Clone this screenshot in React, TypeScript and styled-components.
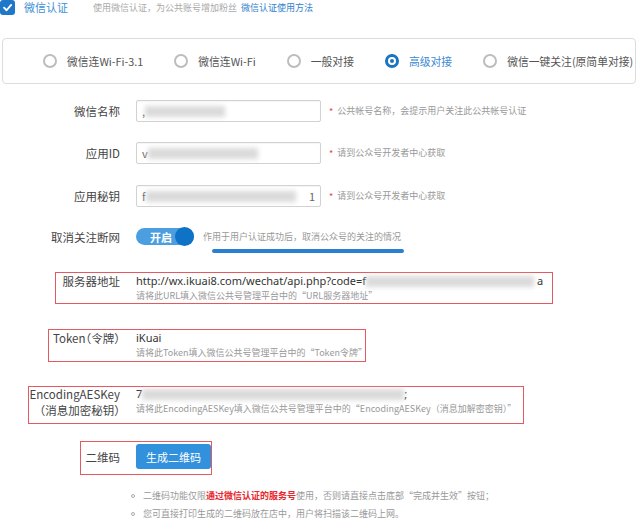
import React from "react";
import styled, { createGlobalStyle } from "styled-components";

const Global = createGlobalStyle`
  html, body { margin: 0; padding: 0; background: #fff; }
  body {
    font-family: "Noto Sans CJK SC", "Noto Sans", sans-serif;
    color: #444;
  }
`;

const Page = styled.div`
  width: 640px;
  height: 525px;
  position: relative;
  overflow: hidden;
  background: #fff;
`;

const Header = styled.div`
  display: flex;
  align-items: center;
  height: 15px;
`;

const CheckBox = styled.span`
  width: 15px;
  height: 15px;
  border-radius: 3px;
  background: #1f77c8;
  display: inline-flex;
  align-items: center;
  justify-content: center;
  flex: none;
`;

const HeaderTitle = styled.span`
  margin-left: 9px;
  font-size: 11px;
  line-height: 15px;
  color: #3c8fd6;
`;

const HeaderDesc = styled.span`
  margin-left: 25px;
  font-size: 9px;
  line-height: 15px;
  color: #aaa;
`;

const Link = styled.a`
  color: #2f82cc;
  margin-left: 4px;
  text-decoration: none;
`;

const ModePanel = styled.div`
  margin: 23px 4px 0 2px;
  height: 46px;
  box-sizing: border-box;
  border: 1px solid #dcdcdc;
  border-radius: 4px;
  display: flex;
  align-items: center;
  padding-left: 40px;
  gap: 31px;
`;

const RadioItem = styled.label<{ $on?: boolean }>`
  display: flex;
  align-items: center;
  gap: 10px;
  font-size: 10.8px;
  color: ${(p) => (p.$on ? "#3a8ad2" : "#555")};
  white-space: nowrap;
`;

const RadioDot = styled.span<{ $on?: boolean }>`
  width: 14px;
  height: 14px;
  box-sizing: border-box;
  border-radius: 50%;
  border: ${(p) => (p.$on ? "3px solid #1b74c0" : "2.5px solid #bdbdbd")};
  display: inline-flex;
  align-items: center;
  justify-content: center;
  flex: none;
  &::after {
    content: "";
    width: 4px;
    height: 4px;
    border-radius: 50%;
    background: ${(p) => (p.$on ? "#1b74c0" : "transparent")};
  }
`;

const Row = styled.div<{ $mt: number; $align?: string }>`
  position: relative;
  display: grid;
  grid-template-columns: 120px 1fr;
  column-gap: 16px;
  align-items: ${(p) => p.$align || "center"};
  margin-top: ${(p) => p.$mt}px;
`;

const Label = styled.div`
  font-size: 11.5px;
  line-height: 16px;
  color: #444;
  text-align: right;
  white-space: nowrap;
  font-feature-settings: "halt";
`;

const Content = styled.div`
  display: flex;
  align-items: center;
`;

const Field = styled.div`
  width: 185px;
  height: 22px;
  box-sizing: border-box;
  border: 1px solid #d2d2d2;
  border-radius: 2px;
  display: flex;
  align-items: center;
  padding: 0 5px;
  font-size: 11px;
  color: #666;
  box-shadow: inset 0 1px 1px rgba(0, 0, 0, 0.04);
`;

const Smudge = styled.span<{ $w: number }>`
  display: inline-block;
  width: ${(p) => p.$w}px;
  height: 11px;
  background: #d6d6d6;
  filter: blur(2.5px);
  opacity: 0.9;
  flex: none;
`;

const Grow = styled.span`
  flex: 1;
`;

const Hint = styled.span`
  font-size: 9px;
  line-height: 14px;
  color: #999;
  white-space: nowrap;
`;

const Required = styled.span`
  color: #e04848;
  margin: 0 4px 0 8px;
  font-size: 9px;
`;

const Toggle = styled.span`
  position: relative;
  width: 58px;
  height: 17px;
  border-radius: 9px;
  background: #4b9fe1;
  display: inline-flex;
  align-items: center;
  padding-left: 14px;
  box-sizing: border-box;
  color: #fff;
  font-size: 11px;
  font-weight: 700;
  flex: none;
  &::after {
    content: "";
    position: absolute;
    right: 0;
    top: -1px;
    width: 19px;
    height: 19px;
    border-radius: 50%;
    background: #0e72c6;
  }
`;

const ToggleHint = styled.span`
  position: relative;
  margin-left: 9px;
  font-size: 9px;
  line-height: 14px;
  color: #999;
  white-space: nowrap;
`;

const Underline = styled.span`
  position: absolute;
  left: 9px;
  right: -3px;
  bottom: -9px;
  height: 4px;
  border-radius: 2px;
  background: #2b7fd0;
`;

const Stack = styled.div`
  display: flex;
  flex-direction: column;
`;

const Value = styled.div`
  display: flex;
  align-items: center;
  font-family: "Noto Sans", "Noto Sans CJK SC", sans-serif;
  font-size: 11px;
  line-height: 16px;
  color: #333;
  white-space: nowrap;
`;

const Annotation = styled.span<{ $l: number; $t: number; $w: number; $h: number }>`
  position: absolute;
  left: ${(p) => p.$l}px;
  top: ${(p) => p.$t}px;
  width: ${(p) => p.$w}px;
  height: ${(p) => p.$h}px;
  box-sizing: border-box;
  border: 1.5px solid #e35a60;
  pointer-events: none;
`;

const Button = styled.button`
  width: 75px;
  height: 25px;
  border: none;
  border-radius: 3px;
  background: #3191dd;
  color: #fff;
  font-family: inherit;
  font-size: 11px;
  padding: 0;
`;

const Notes = styled.ul`
  list-style: none;
  margin: 18px 0 0 0;
  padding: 0 0 0 131px;
`;

const Note = styled.li`
  display: flex;
  align-items: center;
  font-size: 9px;
  line-height: 18px;
  color: #999;
  white-space: nowrap;
  &::before {
    content: "";
    width: 4px;
    height: 4px;
    box-sizing: border-box;
    border: 1px solid #aaa;
    border-radius: 50%;
    margin-right: 8px;
    flex: none;
  }
`;

const Strong = styled.b`
  color: #e8262d;
  font-weight: 700;
`;

const modes = ["微信连Wi-Fi-3.1", "微信连Wi-Fi", "一般对接", "高级对接", "微信一键关注(原简单对接)"];

export default function App() {
  return (
    <Page>
      <Global />
      <Header>
        <CheckBox>
          <svg width="11" height="11" viewBox="0 0 12 12">
            <path d="M2.2 6.2 L5 9 L10 3.2" fill="none" stroke="#fff" strokeWidth="2" strokeLinecap="round" strokeLinejoin="round" />
          </svg>
        </CheckBox>
        <HeaderTitle>微信认证</HeaderTitle>
        <HeaderDesc>
          使用微信认证，为公共账号增加粉丝
          <Link>微信认证使用方法</Link>
        </HeaderDesc>
      </Header>

      <ModePanel>
        {modes.map((m, i) => (
          <RadioItem key={m} $on={i === 3}>
            <RadioDot $on={i === 3} />
            {m}
          </RadioItem>
        ))}
      </ModePanel>

      <Row $mt={16}>
        <Label>微信名称</Label>
        <Content>
          <Field>
            <span>,</span>
            <Smudge $w={80} />
          </Field>
          <Required>*</Required>
          <Hint>公共帐号名称，会提示用户关注此公共帐号认证</Hint>
        </Content>
      </Row>

      <Row $mt={20}>
        <Label>应用ID</Label>
        <Content>
          <Field>
            <span>v</span>
            <Smudge $w={110} />
          </Field>
          <Required>*</Required>
          <Hint>请到公众号开发者中心获取</Hint>
        </Content>
      </Row>

      <Row $mt={21}>
        <Label>应用秘钥</Label>
        <Content>
          <Field>
            <span>f</span>
            <Smudge $w={150} />
            <Grow />
            <span>1</span>
          </Field>
          <Required>*</Required>
          <Hint>请到公众号开发者中心获取</Hint>
        </Content>
      </Row>

      <Row $mt={21}>
        <Label>取消关注断网</Label>
        <Content>
          <Toggle>开启</Toggle>
          <ToggleHint>
            作用于用户认证成功后，取消公众号的关注的情况
            <Underline />
          </ToggleHint>
        </Content>
      </Row>

      <Row $mt={28} $align="start">
        <Annotation $l={55} $t={-1} $w={498} $h={32} />
        <Label>服务器地址</Label>
        <Stack>
          <Value>
            http://wx.ikuai8.com/wechat/api.php?code=f
            <Smudge $w={168} />
            <span>&nbsp;a</span>
          </Value>
          <Hint>请将此URL填入微信公共号管理平台中的“URL服务器地址”</Hint>
        </Stack>
      </Row>

      <Row $mt={27} $align="start">
        <Annotation $l={48} $t={-1} $w={318} $h={33} />
        <Label>Token（令牌）</Label>
        <Stack>
          <Value>iKuai</Value>
          <Hint>请将此Token填入微信公共号管理平台中的“Token令牌”</Hint>
        </Stack>
      </Row>

      <Row $mt={26} $align="start">
        <Annotation $l={28} $t={0} $w={496} $h={38} />
        <Label>
          EncodingAESKey
          <br />
          （消息加密秘钥）
        </Label>
        <Stack>
          <Value>
            7
            <Smudge $w={262} />
            ;
          </Value>
          <Hint>请将此EncodingAESKey填入微信公共号管理平台中的“EncodingAESKey（消息加解密密钥）”</Hint>
        </Stack>
      </Row>

      <Row $mt={26}>
        <Annotation $l={80} $t={-3} $w={132} $h={34} />
        <Label>二维码</Label>
        <Content>
          <Button>生成二维码</Button>
        </Content>
      </Row>

      <Notes>
        <Note>
          二维码功能仅限<Strong>通过微信认证的服务号</Strong>使用，否则请直接点击底部“完成并生效”按钮；
        </Note>
        <Note>您可直接打印生成的二维码放在店中，用户将扫描该二维码上网。</Note>
      </Notes>
    </Page>
  );
}
